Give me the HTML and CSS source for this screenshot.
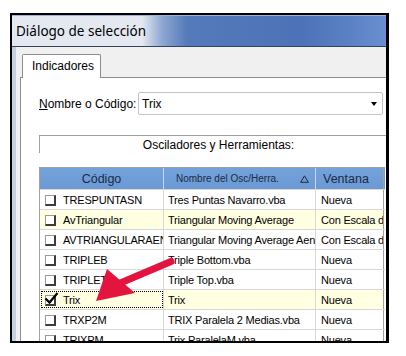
FILE: index.html
```html
<!DOCTYPE html>
<html lang="es">
<head>
<meta charset="utf-8">
<title>Diálogo de selección</title>
<link rel="stylesheet" href="styles.css">
</head>
<body>
<div class="frame">
  <div class="titlebar">Diálogo de selección</div>
  <div class="dlg-body">
    <div class="tabs"><div class="tab">Indicadores</div></div>
    <div class="panel">
      <div class="name-row">
        <span class="label"><u>N</u>ombre o Código:</span>
        <div class="combo"><span>Trix</span><span class="drop"></span></div>
      </div>
      <div class="group">Osciladores y Herramientas:</div>
      <div class="grid">
        <div class="head">
          <div class="hc hc1">Código</div>
          <div class="hc hc2"><span>Nombre del Osc/Herra.</span><svg class="sort" width="9" height="8" viewBox="0 0 9 8"><path d="M4.5 0.8 L8.3 7.3 L0.7 7.3 Z" fill="none" stroke="#1c2b45" stroke-width="1"/></svg></div>
          <div class="hc hc3">Ventana</div>
        </div>
        <div class="row"><div class="c c1"><span class="cb"></span>TRESPUNTASN</div><div class="c c2">Tres Puntas Navarro.vba</div><div class="c c3">Nueva</div></div>
        <div class="row alt"><div class="c c1"><span class="cb"></span>AvTriangular</div><div class="c c2">Triangular Moving Average</div><div class="c c3">Con Escala de</div></div>
        <div class="row"><div class="c c1"><span class="cb"></span>AVTRIANGULARAEN</div><div class="c c2">Triangular Moving Average Aen</div><div class="c c3">Con Escala de</div></div>
        <div class="row"><div class="c c1"><span class="cb"></span>TRIPLEB</div><div class="c c2">Triple Bottom.vba</div><div class="c c3">Nueva</div></div>
        <div class="row"><div class="c c1"><span class="cb"></span>TRIPLET</div><div class="c c2">Triple Top.vba</div><div class="c c3">Nueva</div></div>
        <div class="row alt"><div class="c c1 focus"><span class="cb checked"><svg class="tick" width="15" height="15" viewBox="0 0 15 15"><path d="M1.5 7.5 L5.5 11.5 L13.5 2" fill="none" stroke="#000" stroke-width="2.2"/></svg></span>Trix</div><div class="c c2">Trix</div><div class="c c3">Nueva</div></div>
        <div class="row"><div class="c c1"><span class="cb"></span>TRXP2M</div><div class="c c2">TRIX Paralela 2 Medias.vba</div><div class="c c3">Nueva</div></div>
        <div class="row"><div class="c c1"><span class="cb"></span>TRIXPM</div><div class="c c2">Trix ParalelaM.vba</div><div class="c c3">Nueva</div></div>
      </div>
    </div>
  </div>
</div>
<svg class="arrow" width="406" height="356" viewBox="0 0 406 356">
  <line x1="171" y1="261.5" x2="118" y2="284" stroke="#e3153f" stroke-width="7" stroke-linecap="round"/>
  <polygon points="96,301 107,269 135,293" fill="#e3153f"/>
</svg>
</body>
</html>
```
FILE: styles.css
```css
html, body {
  margin: 0;
  padding: 0;
  background: #fff;
}
body {
  position: relative;
  width: 406px;
  height: 356px;
  overflow: hidden;
  font-family: "Liberation Sans", Arial, sans-serif;
  color: #000;
}
.frame {
  margin: 13px 0 0 10px;
  width: 374px;
  height: 326px;
  border: 2px solid #000;
  border-right-width: 3px;
  overflow: hidden;
  display: flex;
  flex-direction: column;
  background: #f0f0f0;
}
.titlebar {
  flex: 0 0 32px;
  box-sizing: border-box;
  border-top: 1px solid #9fb5dc;
  border-bottom: 1px solid #34425c;
  padding-left: 4px;
  display: flex;
  align-items: center;
  font-family: "Noto Sans", "Open Sans", sans-serif;
  font-size: 13.5px;
  color: #000;
  background: linear-gradient(to right, #e4e9f1 0, #e4e9f1 130px, #8fa7d2 150px, #557aba 175px, #4d72b7 290px, #5c82c6 340px, #6a8fd0 374px);
}
.dlg-body {
  flex: 1 1 auto;
  padding: 7px 0 0 8px;
  box-shadow: inset 4px 0 0 #c4d0e3;
  display: flex;
  flex-direction: column;
  min-height: 0;
}
.tabs {
  display: flex;
  height: 23px;
  position: relative;
  z-index: 1;
}
.tab {
  margin-left: 2px;
  width: 79px;
  height: 24px;
  box-sizing: border-box;
  border: 1px solid #898c95;
  border-bottom: none;
  border-radius: 2px 2px 0 0;
  background: #fff;
  font-size: 12px;
  line-height: 23px;
  padding-left: 9px;
}
.panel {
  flex: 1 1 auto;
  background: #fff;
  border-top: 1px solid #898c95;
  border-left: 1px solid #898c95;
  padding: 14px 0 0 18px;
}
.name-row {
  display: flex;
  align-items: center;
  height: 23px;
}
.label {
  flex: 0 0 99px;
  font-size: 12px;
}
.combo {
  width: 245px;
  height: 23px;
  box-sizing: border-box;
  border: 1px solid #c2c4c8;
  border-radius: 2px;
  display: flex;
  align-items: center;
  justify-content: space-between;
  padding: 0 5px 0 3px;
  font-size: 12px;
}
.drop {
  width: 0;
  height: 0;
  border-left: 3.5px solid transparent;
  border-right: 3.5px solid transparent;
  border-top: 4px solid #000;
}
.group {
  margin-top: 20px;
  width: 358px;
  height: 18px;
  box-sizing: border-box;
  border-top: 1px solid #a0a0a0;
  border-left: 1px solid #a0a0a0;
  text-align: center;
  font-size: 12px;
  line-height: 16px;
  padding-top: 1px;
}
.grid {
  margin-top: 14px;
  width: 345px;
  border-top: 1px solid #a0a0a0;
  border-left: 1px solid #a0a0a0;
  font-size: 11px;
  letter-spacing: -0.2px;
}
.head {
  display: grid;
  grid-template-columns: 124px 152px 68px;
  height: 21px;
  background: linear-gradient(#74a2da, #6a99d4);
  color: #1c2b45;
  letter-spacing: 0;
}
.hc {
  display: flex;
  align-items: center;
  border-right: 1px solid #c6d7ef;
  box-sizing: border-box;
}
.hc1 {
  justify-content: center;
  font-size: 12.5px;
}
.hc2 {
  justify-content: space-between;
  padding: 0 6px 0 12px;
  font-size: 10px;
}
.hc3 {
  padding-left: 7px;
  font-size: 12.5px;
  border-right-color: #a0a0a0;
}
.sort {
  display: block;
}
.row {
  display: grid;
  grid-template-columns: 124px 152px 68px;
  height: 20px;
  box-sizing: border-box;
  border-top: 1px solid #d8d8d8;
  background: #fff;
}
.row.alt {
  background: #ffffe1;
}
.c {
  display: flex;
  align-items: center;
  box-sizing: border-box;
  border-right: 1px solid #d8d8d8;
  white-space: nowrap;
  overflow: hidden;
}
.c1 {
  padding-left: 5px;
}
.c2 {
  padding-left: 4px;
}
.c3 {
  padding-left: 5px;
  border-right-color: #a0a0a0;
}
.focus {
  outline: 1px dotted #000;
  outline-offset: -2px;
}
.cb {
  position: relative;
  flex: 0 0 11px;
  width: 11px;
  height: 11px;
  box-sizing: border-box;
  margin-right: 7px;
  margin-top: 1px;
  background: #fff;
  border: 1px solid #9a9a9a;
  border-right: 2px solid #3c3c3c;
  border-bottom: 2px solid #3c3c3c;
}
.tick {
  position: absolute;
  left: -2px;
  top: -5px;
}
.arrow {
  position: absolute;
  left: 0;
  top: 0;
  pointer-events: none;
}
```
